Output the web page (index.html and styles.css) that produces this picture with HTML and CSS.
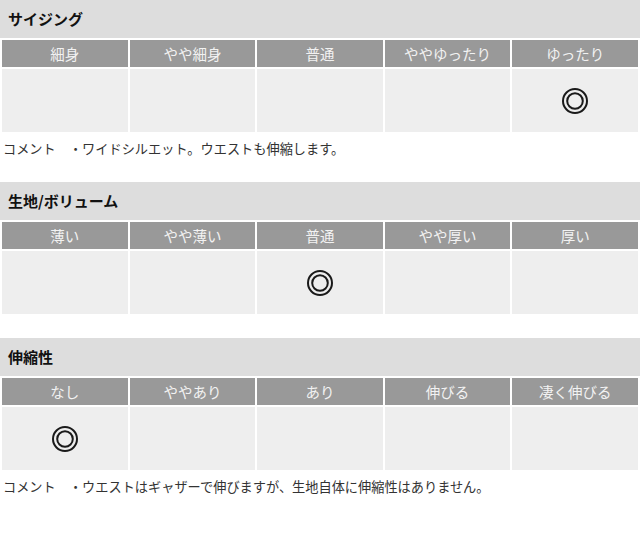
FILE: index.html
```html
<!DOCTYPE html>
<html lang="ja">
<head>
<meta charset="utf-8">
<link rel="stylesheet" href="styles.css">
</head>
<body>
<section class="spec">
  <h2 class="spec-title">サイジング</h2>
  <div class="scale">
    <div class="head">細身</div>
    <div class="head">やや細身</div>
    <div class="head">普通</div>
    <div class="head">ややゆったり</div>
    <div class="head">ゆったり</div>
    <div class="cell"></div>
    <div class="cell"></div>
    <div class="cell"></div>
    <div class="cell"></div>
    <div class="cell"><svg class="mark" viewBox="0 0 28 28" width="28" height="28"><circle cx="14" cy="14" r="12" /><circle cx="14" cy="14" r="7.8" /></svg></div>
  </div>
  <p class="comment">コメント　・ワイドシルエット。ウエストも伸縮します。</p>
</section>

<section class="spec">
  <h2 class="spec-title">生地/ボリューム</h2>
  <div class="scale">
    <div class="head">薄い</div>
    <div class="head">やや薄い</div>
    <div class="head">普通</div>
    <div class="head">やや厚い</div>
    <div class="head">厚い</div>
    <div class="cell"></div>
    <div class="cell"></div>
    <div class="cell"><svg class="mark" viewBox="0 0 28 28" width="28" height="28"><circle cx="14" cy="14" r="12" /><circle cx="14" cy="14" r="7.8" /></svg></div>
    <div class="cell"></div>
    <div class="cell"></div>
  </div>
</section>

<section class="spec">
  <h2 class="spec-title">伸縮性</h2>
  <div class="scale">
    <div class="head">なし</div>
    <div class="head">ややあり</div>
    <div class="head">あり</div>
    <div class="head">伸びる</div>
    <div class="head">凄く伸びる</div>
    <div class="cell"><svg class="mark" viewBox="0 0 28 28" width="28" height="28"><circle cx="14" cy="14" r="12" /><circle cx="14" cy="14" r="7.8" /></svg></div>
    <div class="cell"></div>
    <div class="cell"></div>
    <div class="cell"></div>
    <div class="cell"></div>
  </div>
  <p class="comment">コメント　・ウエストはギャザーで伸びますが、生地自体に伸縮性はありません。</p>
</section>
</body>
</html>
```

FILE: styles.css
```css
html, body {
  margin: 0;
  padding: 0;
  background: #ffffff;
}

body {
  font-family: "Noto Sans CJK JP", "Noto Sans", sans-serif;
  color: #333333;
}

.spec {
  margin: 0 0 22px 0;
}

.spec-title {
  margin: 0;
  height: 38px;
  line-height: 38px;
  padding-left: 8px;
  background: #dddddd;
  font-size: 15px;
  font-weight: bold;
  color: #111111;
}

.scale {
  display: grid;
  grid-template-columns: repeat(5, 1fr);
  grid-template-rows: 27px 63px;
  gap: 2px;
  padding: 2px;
}

.head {
  background: #999999;
  color: #f2f2f2;
  font-size: 14.5px;
  line-height: 27px;
  text-align: center;
}

.cell {
  background: #eeeeee;
  display: flex;
  align-items: center;
  justify-content: center;
}

.mark {
  display: block;
  fill: none;
  stroke: #1a1a1a;
  stroke-width: 2;
}

.comment {
  margin: 0;
  padding: 3px 0 0 3px;
  font-size: 13.2px;
  line-height: 23px;
  color: #333333;
}
```
